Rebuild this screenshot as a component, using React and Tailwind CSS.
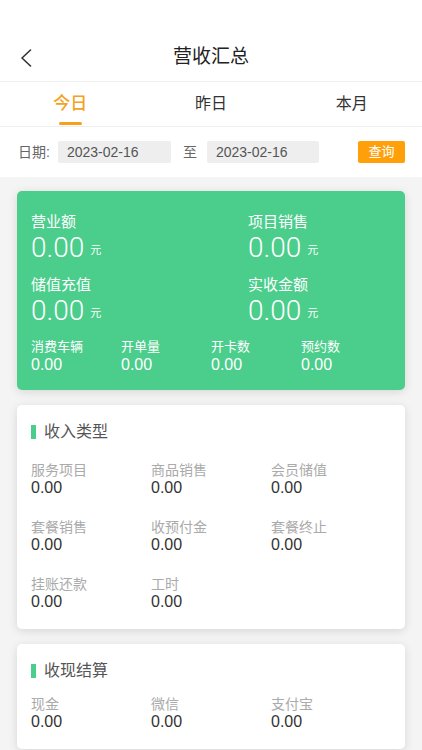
import React, { useState } from "react";

const FONT = { fontFamily: '"Liberation Sans", "Noto Sans CJK SC", sans-serif' };

const incomeTypes = [
  ["服务项目", "0.00"],
  ["商品销售", "0.00"],
  ["会员储值", "0.00"],
  ["套餐销售", "0.00"],
  ["收预付金", "0.00"],
  ["套餐终止", "0.00"],
  ["挂账还款", "0.00"],
  ["工时", "0.00"],
];

const settle = [
  ["现金", "0.00"],
  ["微信", "0.00"],
  ["支付宝", "0.00"],
];

function BigStat({ label, value }) {
  return (
    <div>
      <div className="text-[15px] leading-[20px]">{label}</div>
      <div className="flex items-center h-[32px]">
        <span className="font-[Roboto,sans-serif] font-light text-[28px] leading-[32px]">{value}</span>
        <span className="ml-[6px] mt-[4px] text-[11px] leading-none">元</span>
      </div>
    </div>
  );
}

function SectionCard({ title, items, titleGap }) {
  return (
    <div className="mx-[17px] rounded-[5px] bg-white px-[14px] pt-[16px] pb-[18px] shadow-[0_2px_10px_rgba(0,0,0,0.12)]">
      <div className="flex items-center h-[22px]">
        <div className="w-[5px] h-[14px] bg-[#4bcd8b]" />
        <div className="ml-[8px] text-[16px] leading-[22px] text-[#555]">{title}</div>
      </div>
      <div className={"grid grid-cols-3 gap-y-[21px] " + titleGap}>
        {items.map(([label, value]) => (
          <div key={label}>
            <div className="text-[14px] leading-[18px] text-[#aaa]">{label}</div>
            <div className="text-[16px] leading-[18px] text-[#333]">{value}</div>
          </div>
        ))}
      </div>
    </div>
  );
}

export default function App() {
  const [tab, setTab] = useState(0);
  const tabs = ["今日", "昨日", "本月"];

  return (
    <div style={FONT} className="w-[422px] h-[750px] overflow-hidden bg-[#f4f4f4]">
      <div className="bg-white pt-[34px]">
        {/* header */}
        <div className="relative h-[48px] flex items-center justify-center border-b border-[#eeeeee]">
          <svg className="absolute left-[20px] top-[15px]" width="12" height="18" viewBox="0 0 12 18" fill="none">
            <polyline points="10.5,1 2,9 10.5,17" stroke="#333" strokeWidth="1.6" strokeLinecap="round" strokeLinejoin="round" />
          </svg>
          <div className="text-[19px] text-[#222]">营收汇总</div>
        </div>

        {/* tabs */}
        <div className="flex h-[45px] border-b border-[#eeeeee]">
          {tabs.map((t, i) => (
            <button
              key={t}
              onClick={() => setTab(i)}
              className="flex-1 relative flex items-center justify-center"
            >
              <span className={i === tab ? "text-[17px] font-medium text-[#f5a11d]" : "text-[16px] text-[#333]"}>{t}</span>
              {i === tab && <span className="absolute bottom-[1px] w-[23px] h-[3px] rounded-full bg-[#f5a11d]" />}
            </button>
          ))}
        </div>

        {/* date row */}
        <div className="flex items-center h-[50px] pl-[18px] pr-[17px] text-[14px]">
          <span className="text-[#666]">日期:</span>
          <div className="ml-[8px] w-[113px] h-[22px] rounded-[2px] bg-[#eeeeee] pl-[9px] text-[#555] leading-[22px]">2023-02-16</div>
          <span className="ml-[12px] text-[#666]">至</span>
          <div className="ml-[10px] w-[112px] h-[22px] rounded-[2px] bg-[#eeeeee] pl-[9px] text-[#555] leading-[22px]">2023-02-16</div>
          <button className="ml-auto w-[47px] h-[22px] rounded-[2px] bg-[#ff9f0a] text-white text-[13px]">查询</button>
        </div>
      </div>

      <div className="pt-[14px] flex flex-col gap-[15px]">
        {/* green summary */}
        <div className="mx-[17px] rounded-[5px] bg-[#4bcd8b] text-white pl-[14px] pt-[21px] pb-[17px] shadow-[0_2px_10px_rgba(0,0,0,0.12)]">
          <div className="grid grid-cols-[217px_1fr] gap-y-[11px]">
            <BigStat label="营业额" value="0.00" />
            <BigStat label="项目销售" value="0.00" />
            <BigStat label="储值充值" value="0.00" />
            <BigStat label="实收金额" value="0.00" />
          </div>
          <div className="mt-[11px] grid grid-cols-[90px_90px_90px_90px]">
            {["消费车辆", "开单量", "开卡数", "预约数"].map((l) => (
              <div key={l}>
                <div className="text-[13px] leading-[18px]">{l}</div>
                <div className="text-[16px] leading-[17px]">0.00</div>
              </div>
            ))}
          </div>
        </div>

        <SectionCard title="收入类型" items={incomeTypes} titleGap="mt-[18px]" />
        <SectionCard title="收现结算" items={settle} titleGap="mt-[13px]" />
      </div>
    </div>
  );
}
